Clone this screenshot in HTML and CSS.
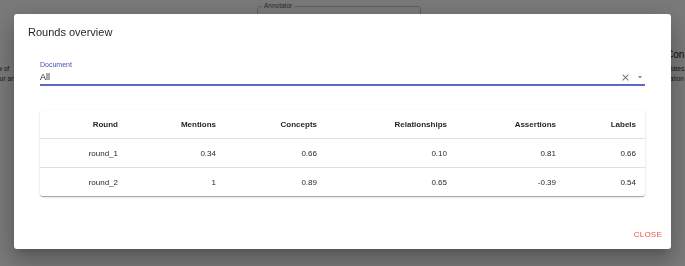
FILE: index.html
```html
<!DOCTYPE html>
<html lang="en">
<head>
<meta charset="utf-8">
<title>Rounds overview</title>
<link rel="stylesheet" href="styles.css">
</head>
<body>
<div class="bg">
  <div class="bg-left">
    <div class="bg-line">Overview of</div>
    <div class="bg-line bg-indent">your annot</div>
  </div>
  <div class="bg-center">
    <fieldset class="bg-field"><legend>Annotator</legend>&nbsp;</fieldset>
  </div>
  <div class="bg-right">
    <div class="bg-head">Con</div>
    <div class="bg-line">Updates,</div>
    <div class="bg-line">Relation</div>
  </div>
</div>

<div class="backdrop">
  <div class="dialog" role="dialog">
    <h2 class="dialog-title">Rounds overview</h2>
    <div class="dialog-content">
      <div class="field">
        <label class="field-label">Document</label>
        <div class="field-input">
          <span class="field-value">All</span>
          <svg class="icon-clear" viewBox="0 0 24 24"><path d="M19 6.41L17.59 5 12 10.59 6.41 5 5 6.41 10.59 12 5 17.59 6.41 19 12 13.41 17.59 19 19 17.59 13.41 12z"/></svg>
          <svg class="icon-drop" viewBox="0 0 24 24"><path d="M7 10l5 5 5-5z"/></svg>
        </div>
      </div>
      <div class="paper">
        <table class="table">
          <colgroup>
            <col class="c1"><col class="c2"><col class="c3"><col class="c4"><col class="c5"><col class="c6">
          </colgroup>
          <thead>
            <tr><th>Round</th><th>Mentions</th><th>Concepts</th><th>Relationships</th><th>Assertions</th><th>Labels</th></tr>
          </thead>
          <tbody>
            <tr><td>round_1</td><td>0.34</td><td>0.66</td><td>0.10</td><td>0.81</td><td>0.66</td></tr>
            <tr><td>round_2</td><td>1</td><td>0.89</td><td>0.65</td><td>-0.39</td><td>0.54</td></tr>
          </tbody>
        </table>
      </div>
    </div>
    <div class="dialog-actions">
      <button class="btn-close">Close</button>
    </div>
  </div>
</div>
</body>
</html>
```
FILE: styles.css
```css
html, body {
  margin: 0;
  padding: 0;
}
body {
  width: 685px;
  height: 266px;
  overflow: hidden;
  background: #f4f4f4;
  font-family: "Liberation Sans", Arial, sans-serif;
  color: rgba(0, 0, 0, 0.87);
}

/* background page */
.bg {
  display: grid;
  grid-template-columns: 39px 1fr 80px;
  margin-left: -25px;
  margin-right: -55px;
  height: 266px;
  font-size: 6.5px;
  line-height: 9.5px;
  color: #333;
}
.bg-left {
  padding-top: 64px;
  white-space: nowrap;
}
.bg-indent {
  margin-left: 18px;
}
.bg-line {
  white-space: nowrap;
}
.bg-center {
  padding-left: 243px;
}
.bg-field {
  width: 164px;
  box-sizing: border-box;
  margin: 2px 0 0;
  padding: 0 4px;
  height: 60px;
  border: 1px solid #bdbdbd;
  border-radius: 3px;
  font-size: 6.5px;
}
.bg-field legend {
  padding: 0 2px;
  color: #555;
  line-height: 8px;
}
.bg-right {
  padding-top: 49px;
  white-space: nowrap;
}
.bg-head {
  font-size: 10px;
  line-height: 12px;
  margin-left: 6px;
  margin-bottom: 3px;
  color: #111;
}

/* overlay */
.backdrop {
  position: fixed;
  inset: 0;
  background: rgba(0, 0, 0, 0.5);
  display: flex;
  align-items: flex-start;
  justify-content: center;
  padding-top: 14px;
}
.dialog {
  width: 657px;
  height: 235px;
  background: #fff;
  border-radius: 3px;
  display: flex;
  flex-direction: column;
  box-shadow: 0 6px 9px -4px rgba(0,0,0,.2), 0 14px 22px 2px rgba(0,0,0,.14), 0 5px 26px 5px rgba(0,0,0,.12);
}
.dialog-title {
  margin: 0;
  padding: 9px 14px 0;
  font-size: 11px;
  line-height: 18px;
  font-weight: 400;
  color: rgba(0, 0, 0, 0.87);
}
.dialog-content {
  padding: 0 26px;
}
.field {
  margin-top: 19.5px;
  display: flex;
  flex-direction: column;
}
.field-label {
  font-size: 7px;
  line-height: 8px;
  color: #3f51b5;
}
.field-input {
  margin-top: 3px;
  display: flex;
  align-items: center;
  height: 11px;
  padding-bottom: 1px;
  border-bottom: 2px solid #5c6bc0;
}
.field-value {
  flex: 1;
  font-size: 9px;
  line-height: 11px;
  color: rgba(0, 0, 0, 0.87);
}
.icon-clear {
  width: 11px;
  height: 11px;
  fill: #757575;
}
.icon-drop {
  width: 10px;
  height: 10px;
  margin-left: 4px;
  fill: #757575;
}

.paper {
  margin-top: 24.5px;
  background: #fff;
  border-radius: 3px;
  box-shadow: 0 2px 1px -1px rgba(0,0,0,.2), 0 1px 1px 0 rgba(0,0,0,.14), 0 1px 3px 0 rgba(0,0,0,.12);
}
.table {
  width: 605px;
  table-layout: fixed;
  border-collapse: collapse;
  font-size: 8px;
  line-height: 11px;
}
.c1 { width: 87px; }
.c2 { width: 98px; }
.c3 { width: 101px; }
.c4 { width: 130px; }
.c5 { width: 109px; }
.c6 { width: 80px; }
.table th, .table td {
  height: 28px;
  box-sizing: content-box;
  padding: 0 9px 0 0;
  text-align: right;
  vertical-align: middle;
  border-bottom: 1px solid #e0e0e0;
}
.table th {
  font-weight: 700;
  color: rgba(0, 0, 0, 0.87);
}
.table tbody tr:last-child td {
  border-bottom: none;
}

.dialog-actions {
  margin-top: auto;
  display: flex;
  justify-content: flex-end;
  padding: 0 9px 9px;
}
.btn-close {
  background: none;
  border: none;
  padding: 0;
  font-family: "Liberation Sans", Arial, sans-serif;
  font-size: 8px;
  line-height: 10px;
  letter-spacing: 0.23px;
  text-transform: uppercase;
  color: #e5534b;
  cursor: pointer;
}
```
